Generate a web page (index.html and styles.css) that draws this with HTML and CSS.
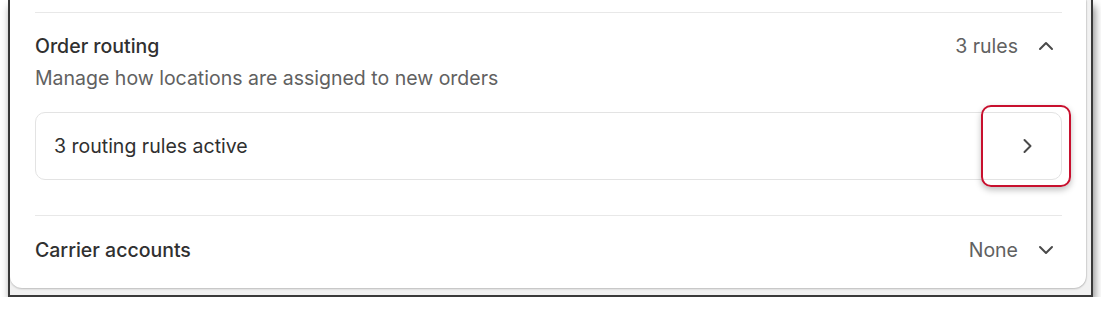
FILE: index.html
```html
<!DOCTYPE html>
<html>
<head>
<meta charset="utf-8">
<link rel="stylesheet" href="styles.css">
</head>
<body>
<div class="frame">
  <div class="card">
    <div class="divider"></div>
    <section class="section">
      <div class="row">
        <h2 class="title">Order routing</h2>
        <div class="meta">
          <span class="meta-text">3 rules</span>
          <svg class="chev" width="20" height="20" viewBox="0 0 20 20"><path d="M4 13 L10 7 L16 13" fill="none" stroke="#4a4a4a" stroke-width="2" stroke-linecap="round" stroke-linejoin="round"/></svg>
        </div>
      </div>
      <p class="subtitle">Manage how locations are assigned to new orders</p>
      <div class="box">
        <span class="box-text">3 routing rules active</span>
        <span class="box-btn">
          <svg width="20" height="20" viewBox="0 0 20 20"><path d="M7.5 4 L13.5 10 L7.5 16" fill="none" stroke="#4a4a4a" stroke-width="2" stroke-linecap="round" stroke-linejoin="round"/></svg>
          <span class="highlight"></span>
        </span>
      </div>
    </section>
    <div class="divider"></div>
    <section class="section last">
      <div class="row">
        <h2 class="title">Carrier accounts</h2>
        <div class="meta">
          <span class="meta-text">None</span>
          <svg class="chev" width="20" height="20" viewBox="0 0 20 20"><path d="M4 7 L10 13 L16 7" fill="none" stroke="#4a4a4a" stroke-width="2" stroke-linecap="round" stroke-linejoin="round"/></svg>
        </div>
      </div>
    </section>
  </div>
</div>
</body>
</html>
```
FILE: styles.css
```css
html, body {
  margin: 0;
  padding: 0;
  background: #ffffff;
}
body {
  font-family: Inter, "Noto Sans", sans-serif;
  color: #303030;
}
.frame {
  margin-left: 8px;
  width: 1085px;
  height: 297px;
  box-sizing: border-box;
  border: 2px solid #3a3a3a;
  border-top: none;
  background: #f1f1f1;
  box-shadow: 2px 6px 8px rgba(0, 0, 0, 0.45);
  padding: 0 5px 7px 0;
  display: flex;
  flex-direction: column;
}
.card {
  flex: 1;
  background: #ffffff;
  border-radius: 0 0 12px 12px;
  box-shadow: 0 1px 2px rgba(0, 0, 0, 0.22), 1px 0 1px rgba(0, 0, 0, 0.08);
  padding: 12px 24px 0 25px;
  display: flex;
  flex-direction: column;
}
.divider {
  height: 1px;
  background: #e8e8e8;
}
.section {
  padding-top: 21px;
  padding-bottom: 35px;
}
.section.last {
  padding-top: 22px;
  padding-bottom: 0;
}
.row {
  display: flex;
  align-items: center;
  justify-content: space-between;
  height: 24px;
}
.title {
  margin: 0;
  font-size: 19.5px;
  font-weight: 500;
  line-height: 24px;
  color: #303030;
}
.meta {
  display: flex;
  align-items: center;
  gap: 18px;
  padding-right: 6px;
}
.meta-text {
  font-size: 19.5px;
  line-height: 24px;
  color: #616161;
}
.chev {
  display: block;
}
.subtitle {
  margin: 8px 0 0;
  font-size: 19.5px;
  line-height: 24px;
  color: #616161;
}
.box {
  margin-top: 22px;
  height: 68px;
  box-sizing: border-box;
  border: 1px solid #e3e3e3;
  border-radius: 10px;
  display: flex;
  align-items: center;
  justify-content: space-between;
  padding-left: 18px;
}
.box-text {
  font-size: 19.5px;
  line-height: 24px;
  color: #303030;
}
.box-btn {
  position: relative;
  width: 68px;
  height: 100%;
  display: flex;
  align-items: center;
  justify-content: center;
}
.highlight {
  position: absolute;
  left: -12px;
  top: -8px;
  width: 90px;
  height: 82px;
  box-sizing: border-box;
  border: 2px solid #c8102e;
  border-radius: 10px;
  box-shadow: 0 3px 6px rgba(0, 0, 0, 0.25);
}
```
